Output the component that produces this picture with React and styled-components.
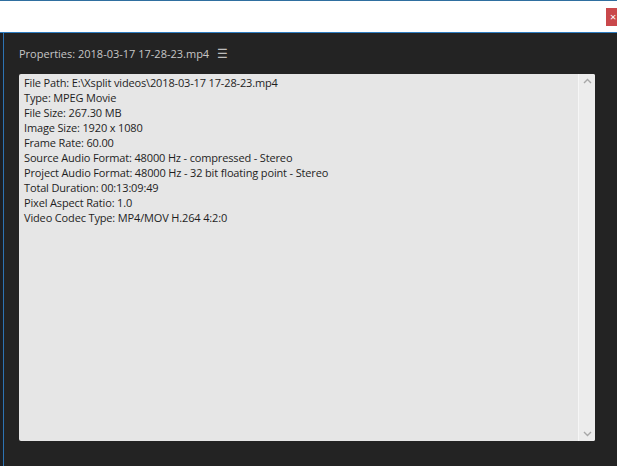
import React from "react";
import styled, { createGlobalStyle } from "styled-components";

const Global = createGlobalStyle`
  html, body { margin: 0; padding: 0; background: #232323; overflow: hidden; }
  #root { width: 617px; height: 466px; }
`;

const Screen = styled.div`
  width: 617px;
  height: 466px;
  display: flex;
  flex-direction: column;
  background: #232323;
  font-family: "Open Sans", "Liberation Sans", sans-serif;
`;

const TopBar = styled.div`
  height: 30px;
  flex: none;
  background: #ffffff;
  border-top: 1px solid #2f6fa0;
  border-bottom: 1px solid #2d7cc0;
  display: flex;
  justify-content: flex-end;
  align-items: flex-start;
  padding-top: 7px;
  box-sizing: border-box;
  height: 33px;
`;

const CloseBtn = styled.div`
  width: 11px;
  height: 18px;
  background: #c9484b;
  color: #fff;
  font-size: 11px;
  line-height: 18px;
  padding-left: 4px;
  box-sizing: border-box;
  overflow: hidden;
`;

const Body = styled.div`
  flex: 1;
  display: flex;
`;

const Gutter = styled.div`
  width: 3px;
  background: #1c1f24;
  border-right: 1px solid #2d73b3;
`;

const Panel = styled.div`
  flex: 1;
  display: flex;
  flex-direction: column;
  padding: 0 22px 25px 15px;
`;

const Header = styled.div`
  height: 41px;
  display: flex;
  align-items: center;
  gap: 8px;
  color: #c6c6c6;
  font-size: 11px;
  padding-bottom: 1px;
  box-sizing: border-box;
`;

const Menu = styled.span`
  font-size: 12px;
  color: #bdbdbd;
`;

const Box = styled.div`
  flex: 1;
  display: flex;
  background: #e6e6e6;
  border-radius: 2px;
  overflow: hidden;
`;

const Lines = styled.div`
  flex: 1;
  padding: 1px 5px;
  color: #1e1e1e;
  font-size: 11px;
  line-height: 15px;
  letter-spacing: -0.15px;
`;

const Line = styled.div`
  white-space: nowrap;
`;

const Scroll = styled.div`
  width: 16px;
  background: #ececec;
  border-left: 1px solid #f6f6f6;
  display: flex;
  flex-direction: column;
  justify-content: space-between;
  align-items: center;
  padding: 4px 0 4px;
`;

const Chevron = ({ down }) => (
  <svg width="9" height="6" viewBox="0 0 9 6">
    <path
      d={down ? "M1 1 L4.5 4.5 L8 1" : "M1 5 L4.5 1.5 L8 5"}
      stroke="#a8a8a8"
      strokeWidth="1.4"
      fill="none"
    />
  </svg>
);

const lines = [
  "File Path: E:\\Xsplit videos\\2018-03-17 17-28-23.mp4",
  "Type: MPEG Movie",
  "File Size: 267.30 MB",
  "Image Size: 1920 x 1080",
  "Frame Rate: 60.00",
  "Source Audio Format: 48000 Hz - compressed - Stereo",
  "Project Audio Format: 48000 Hz - 32 bit floating point - Stereo",
  "Total Duration: 00:13:09:49",
  "Pixel Aspect Ratio: 1.0",
  "Video Codec Type: MP4/MOV H.264 4:2:0",
];

export default function App() {
  return (
    <>
      <Global />
      <Screen>
        <TopBar>
          <CloseBtn>×</CloseBtn>
        </TopBar>
        <Body>
          <Gutter />
          <Panel>
            <Header>
              <span>Properties: 2018-03-17 17-28-23.mp4</span>
              <Menu>☰</Menu>
            </Header>
            <Box>
              <Lines>
                {lines.map((l) => (
                  <Line key={l}>{l}</Line>
                ))}
              </Lines>
              <Scroll>
                <Chevron />
                <Chevron down />
              </Scroll>
            </Box>
          </Panel>
        </Body>
      </Screen>
    </>
  );
}
